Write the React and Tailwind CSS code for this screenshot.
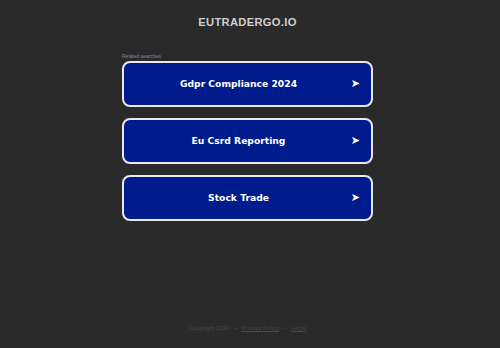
import { } from 'react'

const searches = ['Gdpr Compliance 2024', 'Eu Csrd Reporting', 'Stock Trade']

export default function App() {
  return (
    <div className="w-[500px] h-[348px] bg-[#2a2a2a] overflow-hidden" style={{ fontFamily: '"Liberation Sans", Arial, sans-serif' }}>
      <div className="w-[495px] h-full flex flex-col items-center">
        <h1 className="mt-[16px] text-[11.2px] leading-[13px] font-bold text-[#d0d0d0] tracking-[0.3px]">EUTRADERGO.IO</h1>

        <div className="mt-[24px] w-[251px]">
          <div className="text-[5px] leading-[6px] text-[#8a8a8a] mb-[2px]">Related searches</div>
          <div className="flex flex-col gap-[11px]">
            {searches.map((s) => (
              <a
                key={s}
                href="#"
                className="relative flex items-center justify-center h-[46px] pr-[18px] rounded-[8px] border-2 border-[#e8e8f0] bg-[#001c8c] text-white"
              >
                <span className="text-[9.2px] font-bold" style={{ fontFamily: '"DejaVu Sans", Verdana, sans-serif' }}>{s}</span>
                <span className="absolute right-[11px] top-1/2 -translate-y-1/2 text-[11px]" style={{ fontFamily: '"DejaVu Sans", sans-serif' }}>➤</span>
              </a>
            ))}
          </div>
        </div>

        <div className="mt-auto mb-[16px] text-[6px] leading-[7px] text-[#474747] flex gap-[5px]">
          <span>Copyright 2024</span>
          <span>•</span>
          <span className="underline">Privacy Policy</span>
          <span>•</span>
          <span className="underline">Legal</span>
        </div>
      </div>
    </div>
  )
}
